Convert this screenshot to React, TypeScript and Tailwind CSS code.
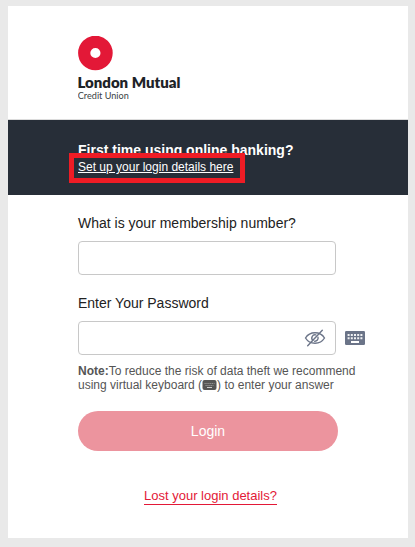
import type { InputHTMLAttributes, ReactNode } from 'react'

interface FieldProps extends InputHTMLAttributes<HTMLInputElement> {
  label: string
  trailingIcon?: ReactNode
  action?: ReactNode
}

function Logo() {
  return (
    <svg width="120" height="68" viewBox="0 0 120 68" role="img" aria-label="London Mutual Credit Union">
      <circle cx="17.4" cy="17" r="11.2" fill="none" stroke="#e31837" strokeWidth="12.2" />
      <text
        x="-0.6"
        y="51.8"
        textLength="103"
        lengthAdjust="spacingAndGlyphs"
        className="fill-[#1d2327] font-['Lato',sans-serif] text-[14px] font-extrabold"
      >
        London Mutual
      </text>
      <text
        x="-0.2"
        y="63"
        textLength="51"
        lengthAdjust="spacingAndGlyphs"
        className="fill-[#3a3f44] font-['Lato',sans-serif] text-[9.5px]"
      >
        Credit Union
      </text>
    </svg>
  )
}

function EyeOffIcon() {
  return (
    <svg width="22" height="18" viewBox="0 0 22 18" fill="none" stroke="#6b7488" strokeWidth="1.4" strokeLinecap="round">
      <path d="M1.500 9C3.600 5.600 7 3.800 11 3.800s7.400 1.800 9.500 5.200c-2.100 3.400-5.500 5.200-9.500 5.200S3.600 12.400 1.500 9z" />
      <path d="M8.900 11.400A3.200 3.200 0 0 1 11.800 5.900" />
      <path d="M14 8.200A3.200 3.200 0 0 1 10.700 12.200" />
      <path d="M18.300 1.300 3.700 16.800" />
    </svg>
  )
}

function KeyboardIcon() {
  return (
    <svg width="20" height="14" viewBox="0 0 20 14">
      <rect width="20" height="14" rx="1.200" fill="#6b7488" />
      <g stroke="#f1f2f4" strokeWidth="2" strokeDasharray="2 1.200">
        <path d="M2.600 4h15" />
        <path d="M2.600 7.200h15" />
      </g>
      <path d="M6 11h8" stroke="#fff" strokeWidth="2" />
    </svg>
  )
}

function SmallKeyboardIcon() {
  return (
    <svg width="15" height="10" viewBox="0 0 15 10" className="inline-block align-[-1px]">
      <rect x="0.500" width="14" height="10" rx="2" fill="#555" />
      <g stroke="#999" strokeWidth="1">
        <path d="M2.500 3.500h10" strokeDasharray="1.200 0.700" />
        <path d="M3.500 5.500h8" strokeDasharray="1.200 0.700" />
        <path d="M5 7.500h5" stroke="#ccc" />
      </g>
    </svg>
  )
}

function Field({ label, trailingIcon, action, id, ...props }: FieldProps) {
  return (
    <div className="flex flex-col gap-2">
      <label htmlFor={id} className="h-5 text-[14px] leading-5 whitespace-nowrap text-[#222]">
        {label}
      </label>
      <div className="flex items-center gap-[9px]">
        <div className="flex h-[34px] w-[258px] shrink-0 items-center rounded-[4px] border border-[#c8c8c8] bg-white pr-[9px]">
          <input id={id} className="h-full min-w-0 flex-1 bg-transparent px-3 text-sm outline-none" {...props} />
          {trailingIcon}
        </div>
        {action}
      </div>
    </div>
  )
}

export default function App() {
  return (
    <div className="h-[547px] w-[415px] bg-[#e9e9e9] pt-[6px] pl-2 font-['Liberation_Sans',Arial,sans-serif]">
      <main className="flex h-[532px] w-[400px] flex-col bg-white">
        <header className="h-[114px] border-b border-[#dcdcdc] pt-[30px] pl-[70px]">
          <Logo />
        </header>

        <section className="h-[75px] bg-[#272e38] pt-[22px] pl-[70px] text-white">
          <h1 className="h-[17px] text-[14px] leading-[17px] font-bold whitespace-nowrap">
            First time using online banking?
          </h1>
          <div className="relative w-fit">
            <a href="#" className="block h-4 text-[12px] leading-4 whitespace-nowrap underline underline-offset-1">
              Set up your login details here
            </a>
            <span className="pointer-events-none absolute -top-[6px] -left-[9px] h-[30px] w-[176px] border-5 border-[#ee1c25]" />
          </div>
        </section>

        <form className="flex flex-col pt-[18px] pl-[70px]">
          <div className="flex flex-col gap-[18px]">
            <Field id="member" type="text" label="What is your membership number?" />
            <Field
              id="password"
              type="password"
              label="Enter Your Password"
              trailingIcon={<EyeOffIcon />}
              action={<KeyboardIcon />}
            />
          </div>

          <p className="mt-[9px] text-[12px] leading-[14px] whitespace-nowrap text-[#555]">
            <strong>Note:</strong>To reduce the risk of data theft we recommend
            <br />
            using virtual keyboard (<SmallKeyboardIcon />) to enter your answer
          </p>

          <button type="button" className="mt-[19px] h-10 w-[260px] rounded-full bg-[#ec949e] text-[14px] text-white">
            Login
          </button>

          <a
            href="#"
            className="mt-[37px] ml-[66px] w-fit border-b border-[#e31837] text-[13px] leading-4 whitespace-nowrap text-[#e31837]"
          >
            Lost your login details?
          </a>
        </form>
      </main>
    </div>
  )
}
